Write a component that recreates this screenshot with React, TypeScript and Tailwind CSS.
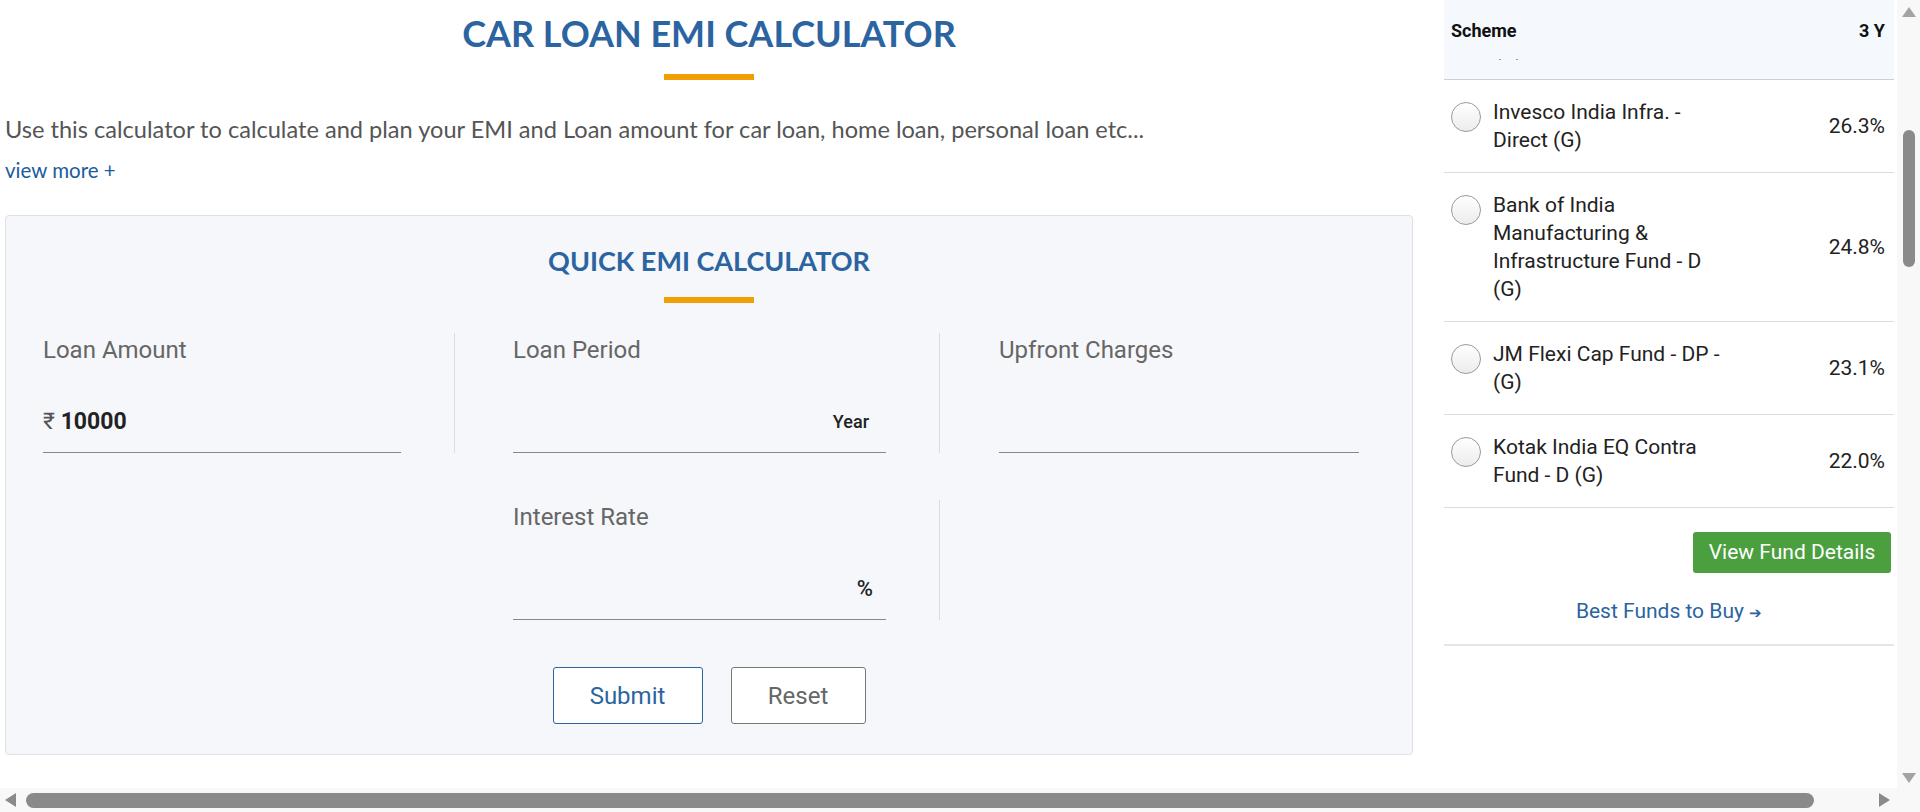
import React from "react";

const FUNDS = [
  { name: "Invesco India Infra. - Direct (G)", ret: "26.3%" },
  { name: "Bank of India Manufacturing & Infrastructure Fund - D (G)", ret: "24.8%" },
  { name: "JM Flexi Cap Fund - DP - (G)", ret: "23.1%" },
  { name: "Kotak India EQ Contra Fund - D (G)", ret: "22.0%" },
];

function Field({ label, children }: { label: string; children?: React.ReactNode }) {
  return (
    <div className="flex flex-col">
      <div className="text-[24px] leading-[34px] text-[#666]">{label}</div>
      <div className="flex h-[86px] items-end justify-between border-b border-[#888] pb-[16px] text-[#222]">
        {children}
      </div>
    </div>
  );
}

function Calculator() {
  return (
    <div className="mt-[32px] rounded-[4px] border border-[#dde1e7] bg-[#f5f7fb] pb-[30px] pt-[27px] font-[Roboto,sans-serif]">
      <h2 className="text-center font-[Lato,sans-serif] text-[27px] font-bold leading-[36px] text-[#2b64a0]">
        QUICK EMI CALCULATOR
      </h2>
      <div className="mx-auto mt-[18px] h-[6px] w-[90px] bg-[#f0a004]" />

      {/* row one */}
      <div className="mt-[30px] flex pl-[37px]">
        <div className="mr-[53px] w-[358px]">
          <Field label="Loan Amount">
            <span className="text-[23px] leading-[28px]">
              <span className="text-[#555]">₹</span> <span className="font-bold text-[#222]">10000</span>
            </span>
          </Field>
        </div>
        <div className="border-l border-[#d9dde2] pl-[58px]">
          <div className="mr-[53px] w-[373px]">
            <Field label="Loan Period">
              <span />
              <span className="pr-[17px] text-[18px] font-medium leading-[28px]">Year</span>
            </Field>
          </div>
        </div>
        <div className="border-l border-[#d9dde2] pl-[59px]">
          <div className="w-[360px]">
            <Field label="Upfront Charges" />
          </div>
        </div>
      </div>

      {/* row two */}
      <div className="mt-[47px] flex pl-[37px]">
        <div className="mr-[53px] w-[358px]" />
        <div className="border-l border-transparent pl-[58px]">
          <div className="mr-[53px] w-[373px]">
            <Field label="Interest Rate">
              <span />
              <span className="pr-[13px] text-[22px] font-medium leading-[28px]">%</span>
            </Field>
          </div>
        </div>
        <div className="border-l border-[#d9dde2] pl-[59px]">
          <div className="w-[360px]" />
        </div>
      </div>

      <div className="mt-[47px] flex justify-center gap-[28px]">
        <button className="h-[57px] w-[150px] rounded-[3px] border border-[#2b64a0] bg-white text-[24px] text-[#2b64a0]">
          Submit
        </button>
        <button className="h-[57px] w-[135px] rounded-[3px] border border-[#777] bg-white text-[24px] text-[#666]">
          Reset
        </button>
      </div>
    </div>
  );
}

function Sidebar() {
  return (
    <aside className="ml-[26px] w-[450px] font-[Roboto,sans-serif] text-[#222]">
      <div className="h-[80px] border-b border-[#cfcfcf] bg-[#f5f8fc] pt-[19px]">
        <div className="flex justify-between pl-[7px] pr-[9px] text-[18px] font-bold leading-[24px] text-[#111]">
          <span>Scheme</span>
          <span>3 Y</span>
        </div>
        <div className="mt-[16px] flex gap-[15px] pl-[55px]">
          <span className="h-[1px] w-[2px] bg-[#999]" />
          <span className="h-[1px] w-[2px] bg-[#999]" />
        </div>
      </div>

      {FUNDS.map((f) => (
        <div key={f.name} className="flex items-start border-b border-[#dcdcdc] py-[18px]">
          <span className="ml-[7px] mt-[4px] h-[30px] w-[30px] shrink-0 rounded-full border border-[#9a9a9a] bg-gradient-to-b from-white to-[#ececec]" />
          <span className="ml-[12px] w-[232px] text-[21px] leading-[28px]">{f.name}</span>
          <span className="ml-auto self-center pr-[9px] text-[21px] leading-[28px]">{f.ret}</span>
        </div>
      ))}

      <div className="border-b-2 border-[#e6e6e6] pb-[17px]">
        <div className="mt-[24px] flex justify-end pr-[3px]">
          <button className="h-[41px] w-[198px] rounded-[3px] bg-[#4b9f3f] text-[21px] text-white">
            View Fund Details
          </button>
        </div>
        <div className="mt-[24px] text-center text-[21px] leading-[28px] text-[#2b64a0]">
          Best Funds to Buy <span className="text-[15px]">➔</span>
        </div>
      </div>
    </aside>
  );
}

export default function App() {
  return (
    <div className="flex h-[812px] w-[1920px] flex-col overflow-hidden bg-white">
      <div className="flex min-h-0 flex-1">
        <main className="w-[1418px] shrink-0 px-[5px] pt-[11px]">
          <h1 className="text-center font-[Lato,sans-serif] text-[36px] font-bold leading-[44px] text-[#2b64a0]">
            CAR LOAN EMI CALCULATOR
          </h1>
          <div className="mx-auto mt-[19px] h-[6px] w-[90px] bg-[#f0a004]" />
          <p className="mt-[34px] font-[Lato,sans-serif] text-[23.6px] leading-[30px] text-[#555]">
            Use this calculator to calculate and plan your EMI and Loan amount for car loan, home loan, personal loan etc...
          </p>
          <a className="mt-[13px] block font-[Lato,sans-serif] text-[20.5px] leading-[26px] text-[#1b5c9c]">view more +</a>
          <Calculator />
        </main>
        <Sidebar />
        {/* vertical scrollbar */}
        <div className="ml-[3px] flex w-[23px] flex-col items-center bg-[#f8f8f8] pt-[7px] pb-[5px]">
          <div className="h-0 w-0 border-x-[7px] border-b-[10px] border-x-transparent border-b-[#a3a3a3]" />
          <div className="mt-[113px] h-[137px] w-[12px] rounded-full bg-[#8a8a8a]" />
          <div className="mt-auto h-0 w-0 border-x-[7px] border-t-[10px] border-x-transparent border-t-[#a3a3a3]" />
        </div>
      </div>
      {/* horizontal scrollbar */}
      <div className="flex h-[24px] items-center bg-[#f8f8f8] pl-[5px]">
        <div className="h-0 w-0 border-y-[7px] border-r-[11px] border-y-transparent border-r-[#8a8a8a]" />
        <div className="ml-[10px] h-[15px] w-[1788px] rounded-full bg-[#8a8a8a]" />
        <div className="ml-[65px] h-0 w-0 border-y-[7px] border-l-[11px] border-y-transparent border-l-[#8a8a8a]" />
      </div>
    </div>
  );
}
